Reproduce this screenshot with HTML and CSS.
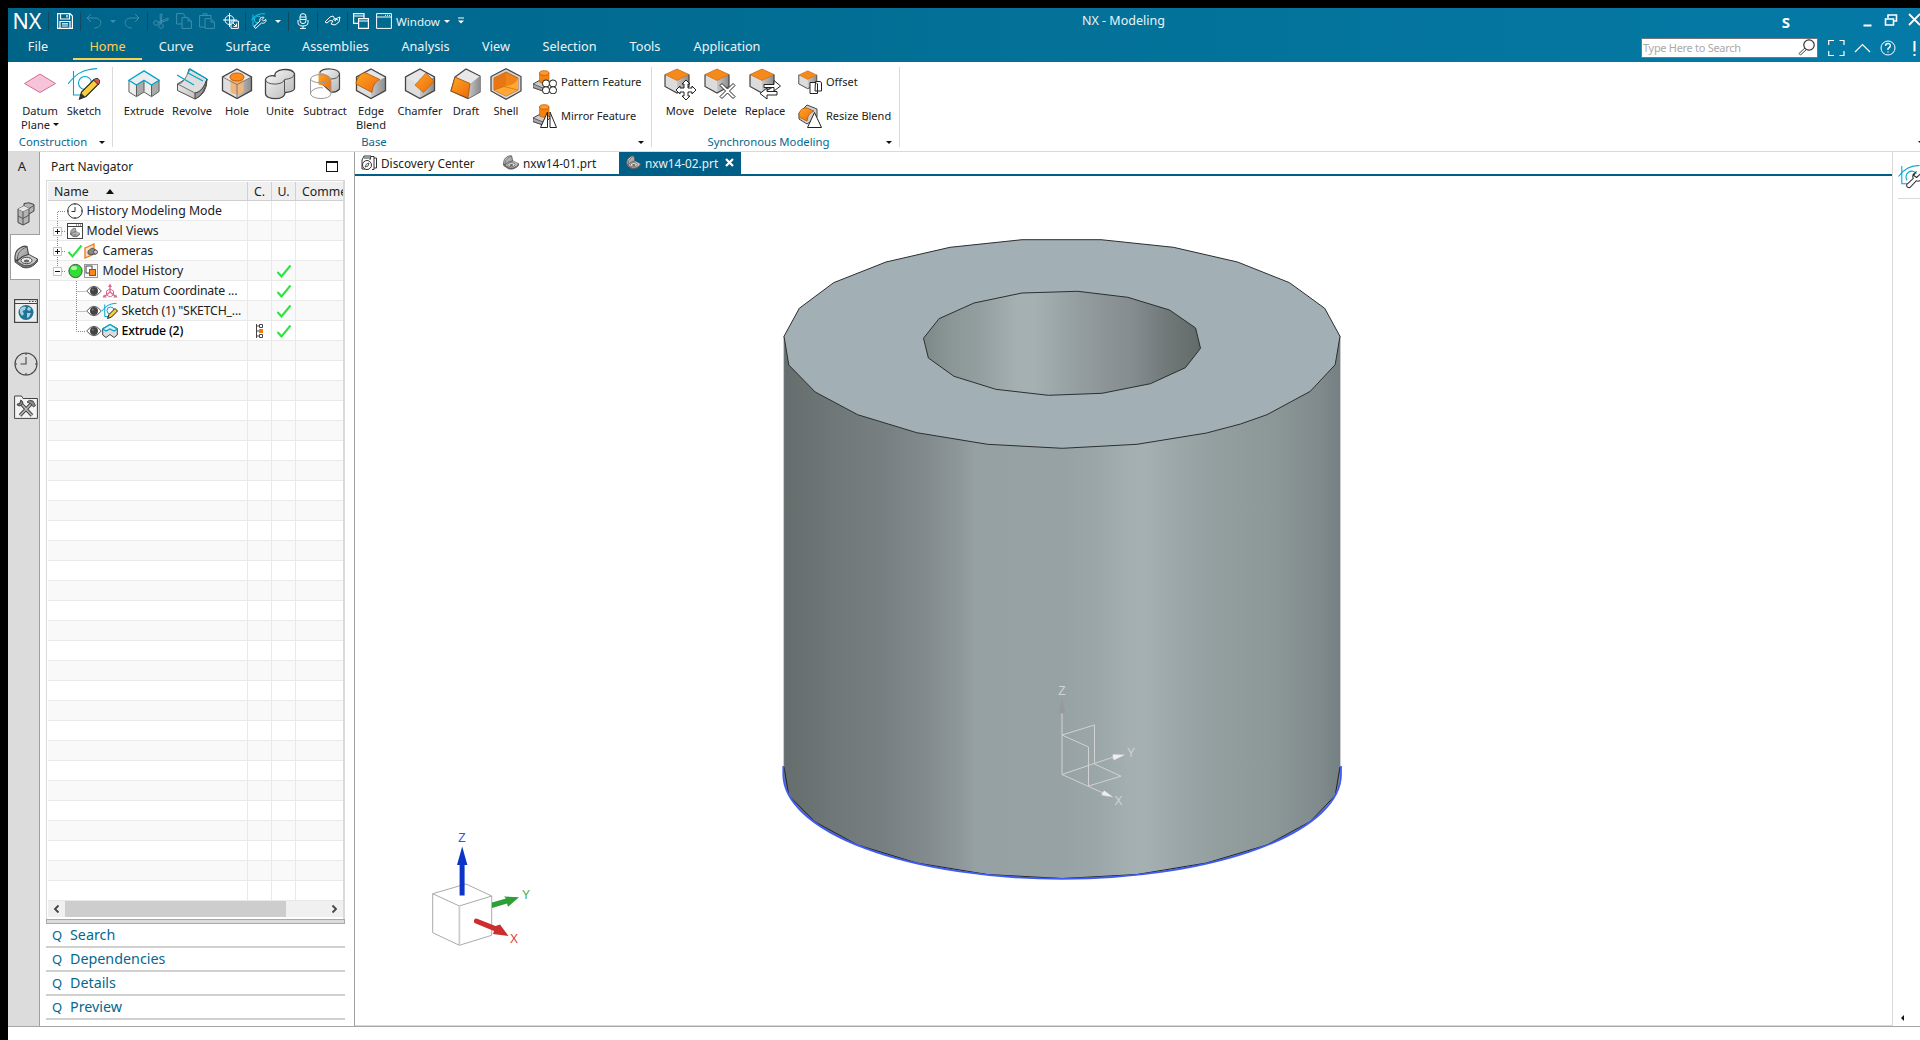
FILE: index.html
```html
<!DOCTYPE html>
<html lang="en">
<head>
<meta charset="utf-8">
<title>NX - Modeling</title>
<link rel="stylesheet" href="styles.css">
</head>
<body>
<svg class="defs" width="0" height="0" aria-hidden="true">
  <defs>
    <linearGradient id="gray" x1="0" y1="0" x2="1" y2="1"><stop offset="0" stop-color="#fafafa"/><stop offset="1" stop-color="#b4b4b4"/></linearGradient>
    <linearGradient id="dark" x1="0" y1="0" x2="1" y2="0"><stop offset="0" stop-color="#c8c8c8"/><stop offset="1" stop-color="#8c8c8c"/></linearGradient>
    <linearGradient id="orange" x1="0" y1="0" x2="1" y2="1"><stop offset="0" stop-color="#ffa526"/><stop offset="1" stop-color="#ec6a08"/></linearGradient>
    <linearGradient id="metal" x1="0" y1="0" x2="1" y2="1"><stop offset="0" stop-color="#d8d8d8"/><stop offset="1" stop-color="#8a8a8a"/></linearGradient>
  </defs>
  <symbol id="cube" viewBox="0 0 32 32">
    <path d="M16 1 L30.500 9 V22.500 L16 30.500 L1.500 22.500 V9Z" fill="#e6e6e6"/>
    <path d="M16 17 L30.500 9 V22.500 L16 30.500Z" fill="url(#dark)"/>
    <path d="M16 17 L1.500 9 V22.500 L16 30.500Z" fill="#dedede"/>
    <path d="M16 1 L30.500 9 V22.500 L16 30.500 L1.500 22.500 V9Z" fill="none" stroke="#444" stroke-width="1.300"/>
  </symbol>
  <symbol id="ocube" viewBox="0 0 32 32">
    <path d="M13 1 L25 6.500 V18.500 L13 25 L1 18.500 V6.500Z" fill="#dcdcdc"/>
    <path d="M13 12.500 L25 6.500 V18.500 L13 25Z" fill="url(#dark)"/>
    <path d="M13 1 L25 6.500 L13 12.500 L1 6.500Z" fill="#f58a1c" stroke="#c85a00" stroke-width=".6"/>
    <path d="M1 6.500 V18.500 L13 25 L25 18.500 V6.500" fill="none" stroke="#444" stroke-width="1.200"/>
  </symbol>
  <symbol id="sketch" viewBox="0 0 32 32">
    <path d="M5.500 3 V27 H17 M0 16 C8 6 14 1.500 29 .6" fill="none" stroke="#00a5cc" stroke-width="1.100"/>
    <circle cx="17" cy="15" r="6.500" fill="none" stroke="#00a5cc" stroke-width="1.100"/>
    <path d="M11.500 31 L13.500 24 L26 11.500 L30.500 16 L18 28.500Z" fill="#f6cf42" stroke="#222" stroke-width="1.100"/>
    <path d="M25.500 12 L27.500 10.500 H30 L32 13 L31 16 L30 16.500Z" fill="#d95252" stroke="#222" stroke-width=".8"/>
    <path d="M11.500 31 L13.200 25 L17.300 29Z" fill="#333"/>
  </symbol>
  <symbol id="part" viewBox="0 0 24 24">
    <path d="M1 14.500 V17 L8 22 Q14 24.500 20 20 L23.500 16.500 V14Z" fill="#777" stroke="#444" stroke-width=".9"/>
    <path d="M1 14.500 L9 8 L15 9.500 L23.500 14 Q21 19 16 20.500 Q10 22 6 18.500Z" fill="#c6c6c6" stroke="#444" stroke-width=".9"/>
    <ellipse cx="12.500" cy="15.500" rx="5.500" ry="3.200" fill="#ececec" stroke="#444"/>
    <ellipse cx="12.500" cy="16" rx="2.800" ry="1.500" fill="#666"/>
    <path d="M1 14.500 Q.5 6 6 3 Q10 .2 13 1.500 L14.500 9.500 L8.500 11.500 L3.500 15.500Z" fill="url(#metal)" stroke="#444" stroke-width="1.100"/>
    <path d="M3.500 15 Q3 8 8 4.500 Q11 2.500 13 2" fill="none" stroke="#555" stroke-width=".9"/>
  </symbol>
  <symbol id="clock" viewBox="0 0 24 24">
    <circle cx="12" cy="12" r="11" fill="none" stroke="#444" stroke-width="1.100"/>
    <path d="M12 5 V12 H6.500 M12 1 V3 M12 21 V23 M1 12 H3 M21 12 H23" fill="none" stroke="#444" stroke-width="1.100"/>
  </symbol>
  <symbol id="check" viewBox="0 0 16 14"><path d="M1.500 8 L5.500 12.500 L14.500 1.500" fill="none" stroke="#2be33c" stroke-width="2"/></symbol>
  <symbol id="eye" viewBox="0 0 16 12">
    <path d="M.7 6 Q8 -3.500 15.300 6 Q8 15.500 .7 6Z" fill="#fff" stroke="#555"/><circle cx="8" cy="6" r="4" fill="#444"/><circle cx="6.800" cy="4.800" r="1" fill="#777"/>
  </symbol>
  <symbol id="extrude" viewBox="0 0 34 32">
    <path d="M1 12 L17 2 L33 12 V24 L25 29.500 L17 24.500 L9 29.500 L1 24.500Z" fill="#ededed"/>
    <path d="M9 17 L17 12 V24.500 L9 29.500Z M25 17 L33 12 V24 L25 29.500Z" fill="#aaa"/>
    <path d="M1 12 V24.500 L9 29.500 L17 24.500 L25 29.500 L33 24 V12 M9 17 V29 M17 12 V24 M25 17 V29" fill="none" stroke="#555" stroke-width="1"/>
    <path d="M1 12 L17 2 L33 12 L25 17 L17 12 L9 17Z" fill="none" stroke="#00a5cc" stroke-width="1.400"/>
  </symbol>
  <symbol id="boss" viewBox="0 0 24 24">
    <path d="M0 14 L9 9 L18 13 L10 21 L0 17.500Z" fill="#ccc" stroke="#444"/>
    <path d="M0 14 L10 18 V21 L0 17.500Z" fill="#aaa" stroke="#444" stroke-width=".8"/>
    <path d="M6.500 3 V12 Q11 15 16 12 V3Z" fill="#f28213" stroke="#c85a00" stroke-width=".6"/>
    <ellipse cx="11.200" cy="3" rx="4.700" ry="2.300" fill="#ff9a2e" stroke="#c85a00" stroke-width=".8"/>
  </symbol>
</svg>

<div class="app">
  <header class="header">
    <div class="quickbar">
      <span class="logo">NX</span>
      <i class="sep"></i>
      <svg width="16" height="16" viewBox="0 0 16 16" class="line"><path d="M.6 .6 H13 L15.400 3 V15.400 H.6Z M3.500 1 V6 H12.500 V1 M10 2 V4.500 M3 15 V8.500 H13 V15 M5 10.800 H11 M5 13 H11" stroke-width="1.200"/></svg>
      <i class="sep"></i>
      <svg width="16" height="16" viewBox="0 0 16 16" class="line dim"><path d="M5 1 L1 5 L5 9 M1 5 H9 C17 5 17 15 8 15"/></svg>
      <i class="caret dim"></i>
      <svg width="16" height="16" viewBox="0 0 16 16" class="line dim"><path d="M11 1 L15 5 L11 9 M15 5 H7 C-1 5 -1 15 8 15"/></svg>
      <i class="sep"></i>
      <svg width="16" height="16" viewBox="0 0 16 16" class="line dim"><circle cx="3" cy="10" r="2.300"/><circle cx="8" cy="13" r="2.300"/><path d="M5 9.500 L15 5 V7 L6 10 M8 10.500 L9 1 L7 1.500 L7.500 10.500"/></svg>
      <svg width="16" height="16" viewBox="0 0 16 16" class="line dim"><path d="M6 11 H.6 V.6 H7 L9 2.500 V4 M6 4.600 H12 L15.400 8 V15.400 H6Z M12 5 V8 H15"/></svg>
      <svg width="16" height="16" viewBox="0 0 16 16" class="line dim"><path d="M6 14 H.6 V2.500 H12 V5 M4 3 V.8 H8 V3 M6 5.600 H12 L15.400 9 V15.400 H6Z M12 6 V9 H15"/></svg>
      <svg width="16" height="16" viewBox="0 0 16 16" class="line"><circle cx="6.500" cy="7" r="4.500"/><path d="M6.500 0 V14 M0 7 H14 M8 8 H15.400 V15.400 H8Z" /><path d="M9.500 9.500 L13.500 13.500 M13.500 10.500 V13.500 H10.500"/></svg>
      <i class="sep"></i>
      <svg width="16" height="16" viewBox="0 0 16 16" class="line"><path class="cyan" d="M2 1.500 V13 H5 M.5 7 C4 2 8 .5 14 .8 M7 10 A3.500 3.500 0 1 1 10 5"/><path d="M4.500 15.500 L3 13.500 L9 8 C8 5 11 3.500 13 4.500 L11 6.500 L12.500 8 L15 6.500 C15.500 9 13 11 10.500 10Z"/></svg>
      <i class="caret"></i>
      <i class="sep"></i>
      <svg width="12" height="16" viewBox="0 0 12 16" class="line"><rect x="3" y=".6" width="6" height="10" rx="3"/><path d="M1 7 V9.500 Q1 13 6 13 Q11 13 11 9.500 V7 M6 13 V15.400 M3 15.400 H9 M3 4 H9 M3 6.500 H9"/></svg>
      <i class="sep"></i>
      <svg width="17" height="14" viewBox="0 0 17 14" class="line"><path d="M1 8 L6 3 L9 2 L11 5 L16 3 L15 8 L11 11 L7 10 L9 7 L6 6.500 L3 9Z M9 5 L12 7 M11 5 L14 6"/></svg>
      <i class="sep"></i>
      <svg width="16" height="16" viewBox="0 0 16 16" class="line"><path d="M5 10.400 H.6 V.6 H11 V5 M.6 3 H11 M5.600 5.600 H15.400 V15.400 H5.600Z M5.600 8 H15.400" stroke-width="1.200"/></svg>
      <svg width="16" height="16" viewBox="0 0 16 16" class="line"><path d="M.6 .6 H15.400 V15.400 H.6Z M.6 4 H15.400 M9 2.300 H10 M11 2.300 H12 M13 2.300 H14"/></svg>
      <span class="qtext">Window</span>
      <i class="caret"></i>
      <svg width="8" height="8" viewBox="0 0 8 8"><path d="M1 1 H7" stroke="#fff"/><path d="M1 3.500 H7 L4 6.500Z" fill="#fff"/></svg>
    </div>
    <div class="title">NX - Modeling</div>
    <div class="winctl">
      <b class="brand">S</b>
      <svg width="60" height="16" viewBox="0 0 60 16" class="line"><path d="M3.500 12.500 H11.500" stroke-width="2"/><path d="M28 5 V2 H36.500 V8 H33.500 M25.500 6 H33.500 V12 H25.500Z" stroke-width="1.600"/><path d="M49 1 L60 12 M49 12 L60 1" stroke-width="1.800"/></svg>
    </div>
    <nav class="menu">
      <span class="file">File</span><span class="on">Home</span><span>Curve</span><span>Surface</span><span>Assemblies</span><span>Analysis</span><span>View</span><span>Selection</span><span>Tools</span><span>Application</span>
    </nav>
    <div class="tools">
      <div class="search"><span>Type Here to Search</span><svg width="17" height="17" viewBox="0 0 17 17"><path d="M7 9 L1 14.500 L2.500 16 L8.500 10.500" fill="#fff" stroke="#444"/><circle cx="11" cy="6" r="5.200" fill="#fff" stroke="#333" stroke-width="1.200"/></svg></div>
      <svg width="91" height="18" viewBox="0 0 91 18" class="line"><path d="M.7 6 V1.500 H6 M11.500 1.500 H16 V6 M16 12 V16.500 H11.500 M6 16.500 H.7 V12" stroke-width="1.200"/><path d="M27 13 L34.500 5.500 L42 13" stroke-width="1.200"/><circle cx="60" cy="9" r="7"/><path d="M57.500 7 Q57.500 4.500 60 4.500 Q62.500 4.500 62.300 7 Q62 8.500 60 9.500 V11 M60 12.500 V13.500" stroke-width="1.300"/><path d="M86.500 2 V12.500 M86.500 15 V17" stroke-width="2"/></svg>
    </div>
  </header>

  <section class="ribbon">
    <div class="group construction">
      <div class="btns">
        <div class="big"><svg viewBox="0 0 32 32"><path d="M.5 15.500 L16 6 L31.500 15.500 L16 24.500Z" fill="#f5c4d8" stroke="#d86a92"/></svg><span>Datum<br>Plane <i class="caret k"></i></span></div>
        <div class="big"><svg viewBox="0 0 32 32"><use href="#sketch"/></svg><span>Sketch</span></div>
      </div>
      <div class="foot"><em>Construction</em><i class="caret k"></i></div>
    </div>
    <div class="group base">
      <div class="btns">
        <div class="big"><svg viewBox="0 0 34 32"><use href="#extrude"/></svg><span>Extrude</span></div>
        <div class="big"><svg viewBox="0 0 32 32"><path d="M1.500 16 L14 8 L13 1 L31 11.500 Q31 26 19 31 L1.500 22.500Z" fill="url(#gray)" stroke="#555"/><path d="M1.500 16 Q9 16 13 1 L31 11 Q27 24 19 25Z" fill="#dedede" stroke="#555" stroke-width=".8"/><path d="M19 25 V31 Q29 27 31 11 Q27 24 19 25Z" fill="#999" stroke="#444"/><path d="M12 5 L14 1 L31 11 M12 5 L27 13 M1 7 L18 17" fill="none" stroke="#00a5cc" stroke-width="1.300"/></svg><span>Revolve</span></div>
        <div class="big"><svg viewBox="0 0 32 32"><use href="#cube"/><path d="M9.500 9 V24 Q16 29 22.500 24 V9Z" fill="#eeb57c"/><path d="M1.500 9 L16 16.500 L30.500 9 M16 16.500 V30" fill="none" stroke="#666" stroke-width=".8"/><ellipse cx="16" cy="9" rx="7" ry="4" fill="#ff8c1c" stroke="#c85a00"/></svg><span>Hole</span></div>
        <div class="big"><svg viewBox="0 0 32 32"><path d="M11 8 C9 1 27 -1 30.500 5.500 V20.500 C30 24 25 24 21 24.500 C21 33 2 32 1.500 26 V11.500 C2 8.500 7 7 11 8Z" fill="url(#gray)" stroke="#444" stroke-width="1.300"/><path d="M1.500 12 C2 17 19 18 20.500 11.500 Q30 10.500 30.500 6 M20.500 12 V24" fill="none" stroke="#555"/></svg><span>Unite</span></div>
        <div class="big"><svg viewBox="0 0 32 32"><path d="M11 4 C15 -.5 29 0 30.500 5.500 V21 Q27 25 22 24 L11 14Z" fill="url(#gray)" stroke="#444" stroke-width="1.200"/><path d="M9.500 4.500 Q21 6 22 12 V24 Q20 18 9.500 16.500Z" fill="url(#orange)"/><path d="M22 11 Q29 11 30.500 6" fill="none" stroke="#555"/><path d="M1.500 11 V26 C3 32 21 32 22 26 V13 M1.500 11 C3 16 20 16 22 11 C20 5 3 5 1.500 11 M1.500 25 C4 20 11 19 14 20" fill="none" stroke="#999"/></svg><span>Subtract</span></div>
        <div class="big"><svg viewBox="0 0 32 32"><use href="#cube"/><path d="M1 15 Q3 6 10 4.500 L25 11.500 Q18 14 17 24.500 L1 16Z" fill="url(#orange)" stroke="#a64a00" stroke-width=".7"/></svg><span>Edge<br>Blend</span></div>
        <div class="big"><svg viewBox="0 0 32 32"><use href="#cube"/><path d="M11 17 L22 5 L30 13 L19.500 24.500Z" fill="url(#orange)" stroke="#c85a00" stroke-width=".7"/></svg><span>Chamfer</span></div>
        <div class="big"><svg viewBox="0 0 32 32"><path d="M5 9 L16 1 L30 8 V24 L18 30.500 L1 23Z" fill="#e8e8e8" stroke="#444" stroke-width="1.200"/><path d="M20 16 L30 8 V24 L18 30.500Z" fill="url(#dark)"/><path d="M5 9 L20 15.500 L18 30 L1 23Z" fill="url(#orange)" stroke="#a64a00" stroke-width=".8"/></svg><span>Draft</span></div>
        <div class="big"><svg viewBox="0 0 32 32"><path d="M16 .7 L31 8.500 V23 L16 31.300 L1 23 V8.500Z" fill="#d5d5d5" stroke="#444" stroke-width="1.200"/><path d="M16 4 L28 10 V22 L16 28 L4 22 V10Z" fill="#f08418" stroke="#a64a00" stroke-width=".7"/><path d="M28 10 Q26 17 16 18 L4 22 L16 28 L28 22Z" fill="#ffa834"/><path d="M4 10 L16 4 V17 L4 22Z" fill="#e87612"/><path d="M4 22 L14 18.500 L28 22" fill="none" stroke="#d06a0c" stroke-width=".7"/></svg><span>Shell</span></div>
        <div class="stack">
          <div><svg viewBox="0 0 24 24"><use href="#boss"/><g fill="#fff" stroke="#222"><circle cx="13" cy="13.500" r="3.600"/><circle cx="20" cy="13.500" r="3.600"/><circle cx="13" cy="20.300" r="3.600"/><circle cx="20" cy="20.300" r="3.600"/></g></svg>Pattern Feature</div>
          <div><svg viewBox="0 0 24 24"><use href="#boss"/><path d="M14.500 8 V23.500 H7.500Z M17 8 V23.500 H23.500Z" fill="#fff" stroke="#222"/></svg>Mirror Feature</div>
        </div>
      </div>
      <div class="foot"><em>Base</em><i class="caret k"></i></div>
    </div>
    <div class="group sync">
      <div class="btns">
        <div class="big"><svg viewBox="0 0 32 32"><use href="#ocube"/><path d="M22 12 L26 16 H24 V20 H28 V18 L32 22 L28 26 V24 H24 V28 H26 L22 32 L18 28 H20 V24 H16 V26 L12 22 L16 18 V20 H20 V16 H18Z" fill="#fff" stroke="#222"/></svg><span>Move</span></div>
        <div class="big"><svg viewBox="0 0 32 32"><use href="#ocube"/><path d="M16 17.500 L18 15.500 L23.500 21 L29 15.500 L31 17.500 L25.500 23 L31 28.500 L29 30.500 L23.500 25 L18 30.500 L16 28.500 L21.500 23Z" fill="#fff" stroke="#222"/></svg><span>Delete</span></div>
        <div class="big"><svg viewBox="0 0 32 32"><use href="#ocube"/><path d="M15 16.500 H25 V12.500 L31.500 18 L25 23 V19.500 H15Z M28 23.500 H18 V20 L11 25.500 L18 31 V27 H28Z" fill="#fff" stroke="#222"/></svg><span>Replace</span></div>
        <div class="stack">
          <div><svg viewBox="0 0 24 24"><svg width="26" height="26" viewBox="0 0 32 32"><use href="#ocube"/></svg><path d="M17.500 11.500 H22.500 L23.500 13 V21 H17Z M12 12.500 H18 L19.500 14 V23.500 H12Z" fill="#fff" stroke="#222"/></svg>Offset</div>
          <div><svg viewBox="0 0 24 24"><path d="M1 9 L9 1 L19 5 V13 L9 20 L1 15Z" fill="#d0d0d0" stroke="#444"/><path d="M1 9 Q4 3 9 4 L16 7 Q10 9 9 17 L1 13Z" fill="url(#orange)" stroke="#a64a00" stroke-width=".7"/><path d="M16.500 8.500 L23.500 23.500 H9.500Z" fill="#fff" stroke="#222"/></svg>Resize Blend</div>
        </div>
      </div>
      <div class="foot"><em>Synchronous Modeling</em><i class="caret k"></i></div>
    </div>
    <i class="caret k last"></i>
  </section>

  <main class="main">
    <aside class="rail">
      <div class="ra">A</div>
      <div class="rb"><svg width="18" height="24" viewBox="0 0 18 24"><path d="M1 7 L7 4 L7 1.500 L12 .8 L17 2.500 V9 L12 12 V20 L6 23 L1 20.500Z" fill="#b5b5b5" stroke="#444"/><path d="M7 4 L12 6.500 L17 3.500 M1 7 L6 9.500 L12 6.500 V12 M6 9.500 V23 M1 14 L6 16.500 L12 13" fill="none" stroke="#555"/><path d="M7 4 L12 6.500 L6 9.500 L1 7Z" fill="#e6e6e6"/></svg></div>
      <div class="rc"><svg width="24" height="24" viewBox="0 0 24 24"><use href="#part"/></svg></div>
      <div class="rd"><svg width="24" height="24" viewBox="0 0 24 24"><rect x=".6" y=".6" width="22.800" height="22.800" fill="#eee" stroke="#444" stroke-width="1.200"/><path d="M1 4.500 H23" stroke="#444"/><path d="M15 2.500 H16.500 M18 2.500 H19.500 M21 2.500 H22" stroke="#444"/><circle cx="12" cy="13.500" r="7.500" fill="#1f7396"/><path d="M6 10 Q9 6.500 12 8 L11 11 L8.500 12 L10 15 L8 17 L6 14Z M14 8 L17 9 L16 12 L13 11Z M13 14 L17 14 L15 18 L13 19Z" fill="#a5d0df"/></svg></div>
      <div class="re"><svg width="24" height="24" viewBox="0 0 24 24"><use href="#clock"/></svg></div>
      <div class="rf"><svg width="24" height="24" viewBox="0 0 24 24"><path d="M.6 23.400 V1 H7.500 L9 3.500 H23.400 V23.400Z" fill="#f4f4f4" stroke="#444"/><path d="M5.500 7 L18 20.500 M18 8 L6 20.500" stroke="#444" stroke-width="3.400"/><path d="M5.500 7 L18 20.500 M18 8 L6 20.500" stroke="#bbb" stroke-width="1.500"/><path d="M3 9 Q3 11 6 11 L9 8.500 Q9 5.500 6.500 5 L7 7.500 L5 9Z M13 7 Q15 4 19 6 L21.500 10.500 L19.500 12 L17 9Z" fill="#888" stroke="#333" stroke-width=".8"/></svg></div>
    </aside>

    <section class="panel">
      <h2>Part Navigator <i class="max"></i></h2>
      <div class="tree">
        <div class="row head"><div class="cname">Name <i class="up"></i></div><div class="cc">C.</div><div class="cu">U.</div><div class="cm">Comme</div></div>
        <div class="row"><div class="cname"><svg class="lead" width="18" height="20"><path d="M9.500 20 V10.500 H18"/></svg><svg class="ic" width="16" height="16" viewBox="0 0 16 16"><path d="M8 4 V8.500 H4.500 M8 .5 V2 M8 14 V15.500 M.5 8 H2 M14 8 H15.500" fill="none" stroke="#333"/><circle cx="8" cy="8" r="7.300" fill="none" stroke="#333"/></svg><span>History Modeling Mode</span></div><div class="cc"></div><div class="cu"></div><div class="cm"></div></div>
        <div class="row alt"><div class="cname"><svg class="lead" width="18" height="20"><path d="M9.500 0 V20 M14 10.500 H18"/><path class="bx" d="M5.500 6.500 H13.500 V14.500 H5.500Z"/><path class="pm" d="M7 10.500 H12 M9.500 8 V13"/></svg><svg class="ic" width="16" height="16" viewBox="0 0 16 16"><rect x=".5" y=".5" width="15" height="15" fill="#fff" stroke="#444"/><path d="M1 3.500 H15 M9 2 H10 M11 2 H12 M13 2 H14" stroke="#444"/><svg x="2.500" y="4.500" width="11" height="10" viewBox="0 0 24 24"><use href="#part"/></svg></svg><span>Model Views</span></div><div class="cc"></div><div class="cu"></div><div class="cm"></div></div>
        <div class="row"><div class="cname"><svg class="lead" width="18" height="20"><path d="M9.500 0 V20 M14 10.500 H18"/><path class="bx" d="M5.500 6.500 H13.500 V14.500 H5.500Z"/><path class="pm" d="M7 10.500 H12 M9.500 8 V13"/></svg><svg class="ic" width="16" height="14"><use href="#check"/></svg><svg class="ic" width="16" height="16" viewBox="0 0 16 16"><path d="M2 5 L11 1 V11 L2 15Z" fill="#fbe0c4" stroke="#e87b17" stroke-width="1.300"/><path d="M5 8 L9 5 L13 7 V11 L8 11.500 L5 11Z" fill="#888" stroke="#444" stroke-width=".8"/><circle cx="12.500" cy="9" r="2" fill="#ccc" stroke="#555"/></svg><span>Cameras</span></div><div class="cc"></div><div class="cu"></div><div class="cm"></div></div>
        <div class="row alt"><div class="cname"><svg class="lead" width="18" height="20"><path d="M9.500 0 V6 M14 10.500 H18"/><path class="bx" d="M5.500 6.500 H13.500 V14.500 H5.500Z"/><path class="pm" d="M7 10.500 H12"/></svg><svg class="ic" width="16" height="16" viewBox="0 0 16 16"><circle cx="8.500" cy="8" r="6.600" fill="#2fe032" stroke="#3a5a3a"/><ellipse cx="7" cy="5" rx="3" ry="2" fill="#aef7a8"/></svg><svg class="ic" width="16" height="16" viewBox="0 0 16 16"><rect x="1.500" y="1.500" width="13" height="13" fill="#f5f5f5" stroke="#999"/><rect x="3" y="3" width="6" height="7" fill="#fff" stroke="#444"/><rect x="6.500" y="6.500" width="6" height="6" fill="#f58a1c" stroke="#a64a00"/></svg><span>Model History</span></div><div class="cc"></div><div class="cu"><svg width="16" height="14"><use href="#check"/></svg></div><div class="cm"></div></div>
        <div class="row child"><div class="cname"><svg class="lead" width="38" height="20"><path d="M28.500 0 V20 M28.500 10.500 H38"/></svg><svg class="ic" width="16" height="12"><use href="#eye"/></svg><svg class="ic" width="16" height="16" viewBox="0 0 16 16"><path d="M8 9 V3 M8 9 L3 13 M8 9 L13 13" stroke="#d86a92" stroke-width="1.300"/><path d="M8 .5 L10 4 H6Z M.5 14.500 L2 11.500 L5 14.500Z M15.500 14.500 L14 11.500 L11 14.500Z" fill="#d86a92"/><path d="M4.500 12 V8 L8 6 L11.500 8 V12 L8 14Z" fill="none" stroke="#d86a92"/></svg><span>Datum Coordinate ...</span></div><div class="cc"></div><div class="cu"><svg width="16" height="14"><use href="#check"/></svg></div><div class="cm"></div></div>
        <div class="row alt child"><div class="cname"><svg class="lead" width="38" height="20"><path d="M28.500 0 V20 M28.500 10.500 H38"/></svg><svg class="ic" width="16" height="12"><use href="#eye"/></svg><svg class="ic" width="16" height="16" viewBox="0 0 32 32"><g><path d="M5.500 3 V27 H17 M0 16 C8 6 14 1.500 29 .6" fill="none" stroke="#00a5cc" stroke-width="2"/><circle cx="17" cy="15" r="7" fill="none" stroke="#00a5cc" stroke-width="2"/><path d="M11 31 L14 23 L26 11 L31 16 L19 28Z" fill="#f6cf42" stroke="#222" stroke-width="2"/></g></svg><span>Sketch (1) "SKETCH_...</span></div><div class="cc"></div><div class="cu"><svg width="16" height="14"><use href="#check"/></svg></div><div class="cm"></div></div>
        <div class="row child"><div class="cname"><svg class="lead" width="38" height="20"><path d="M28.500 0 V10.500 H38"/></svg><svg class="ic" width="16" height="12"><use href="#eye"/></svg><svg class="ic" width="16" height="16" viewBox="0 0 16 16"><path d="M.7 5.500 L8 1.500 L15.300 5.500 V12 L12 14.500 L8 11.500 L4 14.500 L.7 12Z" fill="#ddd" stroke="#444"/><path d="M.7 6 L8 1.500 L15.300 6 L12 8 L8 6 L4 8Z" fill="#d8f1f8" stroke="#00a5cc" stroke-width="1.300"/></svg><strong>Extrude (2)</strong></div><div class="cc"><svg width="9" height="14" viewBox="0 0 9 14"><path d="M1.500 0 V14 M1.500 2 H4 M1.500 7 H4 M1.500 12 H4" stroke="#444"/><path d="M4.500 .5 H7.500 V3.500 H4.500Z M4.500 10.500 H7.500 V13.500 H4.500Z" fill="#fff" stroke="#444"/><path d="M4 5 H8 V9 H4Z" fill="#f07a10"/></svg></div><div class="cu"><svg width="16" height="14"><use href="#check"/></svg></div><div class="cm"></div></div>
        <div class="empty"></div>
        <div class="hscroll"><svg width="17" height="16" viewBox="0 0 17 16"><path d="M10.500 4.500 L7 8 L10.500 11.500"/></svg><i></i><svg width="17" height="16" viewBox="0 0 17 16"><path d="M6.500 4.500 L10 8 L6.500 11.500"/></svg></div>
      </div>
      <div class="split"></div>
      <div class="acc"><i>Q</i>Search</div>
      <div class="acc"><i>Q</i>Dependencies</div>
      <div class="acc"><i>Q</i>Details</div>
      <div class="acc"><i>Q</i>Preview</div>
    </section>

    <section class="work">
      <div class="doctabs">
        <div class="dt disc"><svg width="16" height="16" viewBox="0 0 16 16"><path d="M10 1.500 H13 V14.500 H11 M13 3 H15.500 V13 H13 M1 5 L3 1 H10 L9 5 M1 5 V14 H8 M3 3 H9" fill="none" stroke="#333"/><circle cx="6" cy="10" r="4.500" fill="#fff" stroke="#333"/><path d="M4 12 L5.500 9 L8 8 L7 11Z" fill="none" stroke="#333" stroke-width=".8"/></svg>Discovery Center</div>
        <div class="dt"><svg width="16" height="15" viewBox="0 0 24 24" preserveAspectRatio="none"><use href="#part"/></svg>nxw14-01.prt</div>
        <div class="dt on"><svg width="15" height="15" viewBox="0 0 24 24" preserveAspectRatio="none"><use href="#part"/></svg>nxw14-02.prt<svg class="x" width="9" height="9" viewBox="0 0 9 9"><path d="M1 1 L8 8 M8 1 L1 8" stroke="#fff" stroke-width="2.200"/></svg></div>
      </div>
      <svg class="scene" width="1537" height="849" viewBox="355 176 1537 849">
        <defs>
          <linearGradient id="outer" gradientUnits="userSpaceOnUse" x1="784" x2="1340" y1="0" y2="0">
            <stop offset="0" stop-color="#656d6d"/><stop offset=".1" stop-color="#707879"/><stop offset=".18" stop-color="#777f81"/><stop offset=".26" stop-color="#838b8e"/><stop offset=".31" stop-color="#8c9698"/><stop offset=".345" stop-color="#96a1a3"/><stop offset=".5" stop-color="#97a2a4"/><stop offset=".57" stop-color="#9ca7a9"/><stop offset=".62" stop-color="#a4afb1"/><stop offset=".65" stop-color="#a5b0b2"/><stop offset=".7" stop-color="#9da8aa"/><stop offset=".78" stop-color="#939e9f"/><stop offset=".88" stop-color="#8c9798"/><stop offset=".96" stop-color="#818b8d"/><stop offset="1" stop-color="#748082"/>
          </linearGradient>
          <linearGradient id="inner" gradientUnits="userSpaceOnUse" x1="923" x2="1200" y1="0" y2="0">
            <stop offset="0" stop-color="#7d8788"/><stop offset=".1" stop-color="#8b9697"/><stop offset=".2" stop-color="#939e9f"/><stop offset=".34" stop-color="#a5b0b2"/><stop offset=".4" stop-color="#a5b0b2"/><stop offset=".52" stop-color="#98a3a5"/><stop offset=".65" stop-color="#8d9598"/><stop offset=".76" stop-color="#848c8f"/><stop offset=".88" stop-color="#707878"/><stop offset="1" stop-color="#636a6a"/>
          </linearGradient>
        </defs>
        <path d="M784 336 V774.500 A278 104 0 0 0 1340 774.500 V336Z" fill="url(#outer)" stroke="#7b8283" stroke-width=".8"/>
        <path d="M784 767 L788.800 795.500 L815.200 822 L857.700 845 L916.800 863 L987.500 874.500 L1062.400 878.500 L1137 874.500 L1206.500 863 L1267 845 L1310.300 821.500 L1335.200 795.500 L1340 767" fill="none" stroke="#222" stroke-width="1"/>
        <path d="M783.300 766 V774.300 A278.850 104.500 0 0 0 1341 774.300 V766" fill="none" stroke="#3f5cf5" stroke-width="1.800"/>
        <path d="M1022 239.700 H1101 L1173.500 247.300 L1237.500 262 L1289.500 282.700 L1324.700 308.300 L1340 336.300 L1335.200 364.700 L1310.300 391.300 L1267 414.700 L1240.500 424 L1206.500 433 L1137 444.300 L1062.400 448.300 L987.500 444.300 L916.800 432.700 L857.700 414.700 L815.200 392 L788.800 365 L784 336.300 L799.300 308.300 L833.600 282.700 L886 262 L950 247.300Z" fill="#a2afb4" stroke="#2b2f30"/>
        <path d="M1077.800 291.300 L1127.800 297.300 L1169.600 310 L1195.600 328 L1200.500 348.300 L1185.400 367.700 L1150.400 383.700 L1102 393.300 L1048.400 395.300 L995.800 389.300 L954 376.300 L928.400 358 L923.500 338.300 L939 318.700 L974 303 L1022 293Z" fill="url(#inner)" stroke="#2b2f30"/>
        <g class="csys">
          <path d="M1062 713 V774.500 L1112 757.500 M1062 774.500 L1102 792.500 M1062 735 L1094.500 725 V764 L1121 776.200 L1088.500 786 V747 L1062 735" fill="none" stroke="#d2d2d2"/>
          <path d="M1062 698 L1065 712 Q1062 715 1059 712Z" fill="#999"/>
          <path d="M1126 754.500 L1113 754 Q1111 757.500 1114 760.500Z M1114 797.500 L1104.500 790.500 Q1101 792 1101.500 795.500Z" fill="#eee" stroke="#aaa" stroke-width=".6"/>
          <text x="1062" y="695">Z</text><text x="1131" y="757">Y</text><text x="1118.500" y="804.500">X</text>
        </g>
        <g class="triad">
          <path d="M432.700 893.700 L466 884 L491.700 896 V935.300 L459.300 945.300 L432.700 932.700Z M432.700 893.700 L459.300 906 L491.700 896 M459.300 906 V945.300" fill="#fff" stroke="#aaa"/>
          <path d="M459.500 906 V945" stroke="#ccc" stroke-width="1.500"/>
          <path d="M459.600 895.500 V865 H457 L462.200 846.500 L467.400 865 H464.600 V895.500Z" fill="#0a35c8"/>
          <path d="M492 902.500 L506 898.500 L504 896.500 L519 897.300 L508 906.800 L507 903.500 L492 908Z" fill="#2e9e36"/>
          <path d="M475 918.700 L476.500 918.500 L495.500 926 L500 924.500 L508.500 936 L493 934 L494 931 L474.500 923 Q473 920.500 475 918.700Z" fill="#cc2e30"/>
          <text class="z" x="462" y="842">Z</text><text class="y" x="526" y="899">Y</text><text class="xx" x="514" y="943">X</text>
        </g>
      </svg>
    </section>

    <aside class="right">
      <svg width="22" height="25" viewBox="0 0 22 25"><path d="M3.500 1 V19.500 H10 M0 12 C6 4 12 .7 22 .5 M19 9 A6 6 0 1 0 9 16" fill="none" stroke="#00a5cc" stroke-width="1.100"/><path d="M24 8 L19 13 L16 11 L18 7.500 Q13.500 10 15.500 14 L8.500 20.500 Q8.500 24 12 23.500 L18.500 16.500 Q22 18 25 14" fill="#fff" stroke="#333" stroke-width="1.100"/></svg>
      <i class="back"></i>
    </aside>
  </main>
</div>
</body>
</html>
```

FILE: styles.css
```css
* { box-sizing: border-box; }
html, body { margin: 0; height: 100%; overflow: hidden; background: #000; }
body { font-family: "Noto Sans", "Open Sans", sans-serif; font-size: 12px; color: #222; white-space: nowrap; }
i, em { font-style: normal; }
svg { display: block; flex: none; }
.defs { position: absolute; }
.app { margin: 8px 0 0 8px; width: 1912px; height: 1032px; background: #fff; overflow: hidden; }

.header { height: 54px; display: grid; grid-template: 26px 28px / 1070px 1fr auto; background: linear-gradient(90deg, #006489, #037198 55%, #057aa6); color: #eaf4f8; }
.quickbar { grid-area: 1 / 1; display: grid; align-items: center; justify-items: center; grid-template-columns: 37px 6px 28px 2px 26px 12px 26px 4px 24px 22px 24px 24px 4px 24px 14px 6px 24px 4px 26px 4px 24px 22px 46px 12px 16px; }
.logo { font-size: 21.5px; line-height: 26px; color: #fff; margin-left: 1px; }
.qtext { font-size: 11.6px; }
.sep { width: 1px; height: 19px; background: #124a63; }
.line { fill: none; stroke: #fff; stroke-width: 1; overflow: visible; }
.line .cyan { stroke: #1fc4ec; }
.line.dim { stroke: #3f8dab; }
.caret { display: inline-block; border: 3px solid transparent; border-top: 3.500px solid #fff; border-bottom: 0; }
.caret.dim { border-top-color: #3f8dab; }
.caret.k { border-top-color: #111; }
.title { grid-area: 1 / 2; font-size: 12.5px; line-height: 25px; padding-left: 4px; }
.winctl { grid-area: 1 / 3; display: flex; align-items: center; justify-content: flex-end; gap: 70px; }
.brand { font-size: 15px; line-height: 26px; color: #fff; padding-top: 1px; }
.menu { grid-area: 2 / 1; display: grid; grid-template-columns: 65px 69px 68px 76px 99px 81px 60px 87px 64px 100px; text-align: center; font-size: 12.7px; line-height: 25px; }
.menu .file { padding-right: 5px; }
.menu .on { color: #ffcf4f; border-bottom: 2px solid #ffcf4f; height: 26px; }
.tools { grid-area: 2 / 3; width: 279px; display: flex; align-items: flex-start; padding-top: 4px; gap: 10px; }
.tools > svg { margin-top: 1px; }
.search { width: 177px; height: 20px; border: 1px solid #777; background: #fff; color: #aaa; display: flex; align-items: center; justify-content: space-between; font-size: 11px; letter-spacing: -.3px; padding: 0 2px 1px 1px; }

.ribbon { height: 90px; border-bottom: 1px solid #d9d9d9; display: flex; }
.group { flex: none; display: flex; flex-direction: column; padding-top: 5px; position: relative; }
.group::after { content: ""; position: absolute; right: 0; top: 5px; height: 80px; width: 1px; background: #d9d9d9; }
.construction { width: 105px; }
.base { width: 539px; }
.sync { width: 248px; }
.btns { height: 66px; display: grid; justify-items: center; font-size: 11.1px; line-height: 14px; }
.construction .btns { grid-template-columns: 64px 24px; }
.base .btns { grid-template-columns: 62px 34px 56px 30px 60px 32px 66px 26px 54px 1fr; }
.sync .btns { grid-template-columns: 56px 24px 66px 1fr; }
.big { display: flex; flex-direction: column; align-items: center; text-align: center; width: 0; }
.big svg { width: 32px; height: 32px; margin-bottom: 4px; margin-top: 1px; }
.big .caret { vertical-align: 3px; }
.stack { display: grid; grid-template-rows: 34px 34px; justify-self: start; font-size: 11px; padding-top: 1px; }
.stack div { display: flex; align-items: center; gap: 4px; height: 28px; }
.stack svg { width: 24px; height: 24px; }
.foot { display: flex; align-items: center; justify-content: center; position: relative; color: #04688f; line-height: 17px; font-size: 11.3px; }
.foot .caret { position: absolute; right: 8px; top: 8px; }
.construction .foot { padding-right: 15px; }
.base .foot { padding-right: 17px; }
.last { flex: none; margin: 79px 0 0 1018px; height: 4px; }
.sync .foot { padding-right: 15px; }

.main { display: flex; height: 875px; border-bottom: 1px solid #a6a6a6; }
.rail { width: 32px; background: #dcdcdc; border-right: 1px solid #a0a0a0; display: grid; grid-template-rows: 28px 54px 46px 62px 44px 42px; align-content: start; align-items: center; justify-items: center; }
.rail svg { margin-left: 4px; }
.ra { font-size: 13px; padding-right: 3px; }
.rb { padding-top: 14px; }
.rc { align-self: stretch; display: flex; align-items: center; width: 30px; background: #fff; border: 1px solid #a0a0a0; border-right: 0; margin: 0 -3px 0 0; }
.rc svg { margin-left: 3px; }

.panel { width: 315px; border-right: 1px solid #a0a0a0; padding: 0 9px 0 6px; }
.panel h2 { margin: 0; height: 28px; font-size: 12px; font-weight: 400; line-height: 30px; padding: 1px 7px 0 5px; display: flex; align-items: center; justify-content: space-between; }
.max { width: 12px; height: 11px; border: 1px solid #111; border-top-width: 2px; }
.tree { border: 1px solid #d9d9d9; border-width: 1px 2px 1px 1px; height: 740px; overflow: hidden; padding: 1px 0 0 1px; }
.row { display: grid; grid-template-columns: 200px 24px 24px 1fr; height: 20px; border-bottom: 1px solid #e9e9e9; font-size: 12.3px; line-height: 19px; overflow: hidden; }
.row.alt { background: #f9f9f9; }
.row > div { border-right: 1px solid #e9e9e9; display: flex; align-items: center; overflow: hidden; }
.row > .cm { border-right: 0; }
.row > .cc, .row > .cu { justify-content: center; }
.row.head { height: 19px; background: #f0f0f0; border-bottom: 1px solid #cfcfcf; }
.row.head > div { border-color: #d0d0d0; }
.head .cname { padding-left: 6px; gap: 17px; }
.head .cm { padding-left: 6px; }
.up { border: 4.500px solid transparent; border-bottom: 5px solid #111; border-top: 0; }
.lead { fill: none; stroke: #888; stroke-dasharray: 1 1; }
.lead + .ic { margin-left: 1px; }
.lead .bx { fill: #fff; stroke: #c4c4c4; stroke-dasharray: none; }
.lead .pm { stroke: #111; stroke-dasharray: none; }
.row .ic + span, .row .ic + strong { padding-left: 3.500px; }
.child .lead + .ic { margin-left: 0; }
.child span { letter-spacing: -.2px; }
.row strong { font-weight: 500; color: #000; letter-spacing: -.2px; }
.empty { height: 560px; background:
  linear-gradient(90deg, transparent 199px, #e9e9e9 199px 200px, transparent 200px 223px, #e9e9e9 223px 224px, transparent 224px 247px, #e9e9e9 247px 248px, transparent 248px),
  repeating-linear-gradient(#f9f9f9 0 19px, #e9e9e9 19px 20px, #fff 20px 39px, #e9e9e9 39px 40px); }
.hscroll { display: flex; height: 16px; background: #f0f0f0; }
.hscroll i { width: 221px; background: #cdcdcd; margin-right: auto; }
.hscroll path { fill: none; stroke: #444; stroke-width: 1.800; }
.split { height: 5px; border: 1px solid #a8a8a8; background: #dcdcdc; margin-top: -1px; }
.acc { height: 24px; line-height: 22px; border-bottom: 2px solid #d0d0d0; color: #04688f; font-size: 14.3px; padding-left: 6px; display: flex; }
.acc i { width: 18px; font-size: 13px; }

.work { width: 1538px; border-right: 1px solid #d9d9d9; border-bottom: 1px solid #d9d9d9; }
.doctabs { height: 24px; border-bottom: 2px solid #005f87; display: flex; font-size: 11.8px; }
.dt { display: flex; align-items: center; gap: 4px; width: 117px; padding: 0 0 1px 1px; }
.dt.disc { width: 147px; padding-left: 6px; }
.dt.on { background: #005f87; color: #e8f2f6; width: 122px; padding-left: 7px; }
.dt .x { margin-left: 3px; }
.csys text { fill: #d2d2d2; }
.scene text { font: 12px "Liberation Sans", sans-serif; text-anchor: middle; }
.triad .z { fill: #2456e8; }
.triad .y { fill: #3fae46; }
.triad .xx { fill: #e03a3a; }

.right { width: 27px; padding: 13px 0 0 5px; display: flex; flex-direction: column; justify-content: space-between; overflow: hidden; }
.right svg { border-bottom: 1px solid #d9d9d9; height: 34px; padding-bottom: 9px; }
.back { border: 3px solid transparent; border-right: 3px solid #111; border-left: 0; width: 3px; height: 6px; margin: 0 0 5px 3px; }
```
